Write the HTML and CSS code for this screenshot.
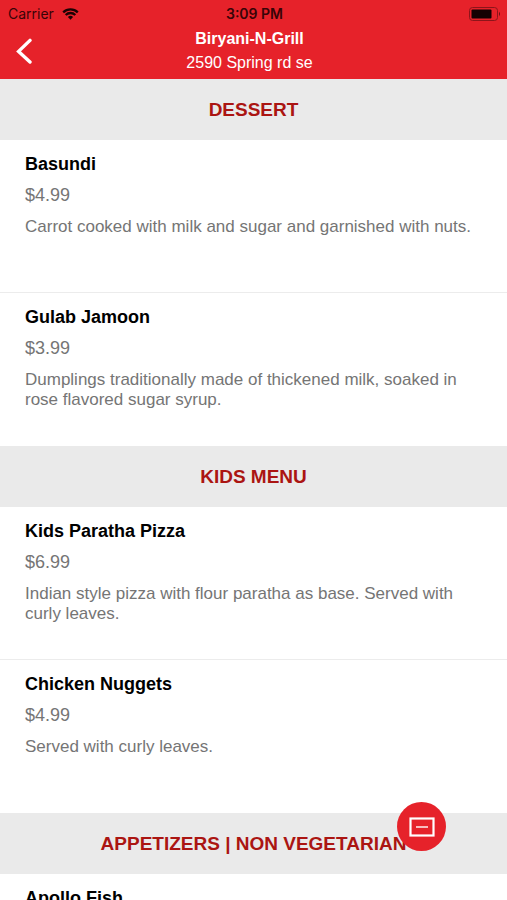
FILE: index.html
```html
<!DOCTYPE html>
<html lang="en">
<head>
<meta charset="utf-8">
<meta name="viewport" content="width=device-width, initial-scale=1">
<title>Biryani-N-Grill</title>
<link rel="stylesheet" href="styles.css">
</head>
<body>
<div class="app">
  <header class="top">
    <div class="status">
      <div class="carrier">
        <span>Carrier</span>
        <svg class="wifi" viewBox="0 0 17 12" aria-hidden="true">
          <path d="M1.2 4.4a10.4 10.4 0 0 1 14.6 0" />
          <path d="M3.7 7a6.8 6.8 0 0 1 9.6 0" />
          <path class="wifi-dot" d="M8.5 11.8 5.9 9.1a3.7 3.7 0 0 1 5.2 0z" />
        </svg>
      </div>
      <time class="clock">3:09 PM</time>
      <svg class="battery" viewBox="0 0 32 14" aria-hidden="true">
        <rect class="battery-case" x="0.5" y="0.5" width="28" height="13" rx="3" />
        <rect x="2.5" y="2.5" width="20" height="9" rx="1" />
        <path d="M30 4.8q2 2.2 0 4.4z" opacity=".6" />
      </svg>
    </div>
    <div class="nav">
      <button class="back" type="button" aria-label="Back">
        <svg viewBox="0 0 16 26" aria-hidden="true"><path d="M14 2.4 2.6 13.4 14 24" /></svg>
      </button>
      <div class="place">
        <h1 class="place-name">Biryani-N-Grill</h1>
        <p class="place-address">2590 Spring rd se</p>
      </div>
    </div>
  </header>
  <main class="menu">
    <section>
      <h2 class="section-title">DESSERT</h2>
      <article class="item">
        <h3 class="item-name">Basundi</h3>
        <p class="item-price">$4.99</p>
        <p class="item-text">Carrot cooked with milk and sugar and garnished with nuts.</p>
      </article>
      <article class="item">
        <h3 class="item-name">Gulab Jamoon</h3>
        <p class="item-price">$3.99</p>
        <p class="item-text">Dumplings traditionally made of thickened milk, soaked in rose flavored sugar syrup.</p>
      </article>
    </section>
    <section>
      <h2 class="section-title">KIDS MENU</h2>
      <article class="item">
        <h3 class="item-name">Kids Paratha Pizza</h3>
        <p class="item-price">$6.99</p>
        <p class="item-text">Indian style pizza with flour paratha as base. Served with curly leaves.</p>
      </article>
      <article class="item">
        <h3 class="item-name">Chicken Nuggets</h3>
        <p class="item-price">$4.99</p>
        <p class="item-text">Served with curly leaves.</p>
      </article>
    </section>
    <section>
      <h2 class="section-title">APPETIZERS | NON VEGETARIAN</h2>
      <article class="item">
        <h3 class="item-name">Apollo Fish</h3>
      </article>
    </section>
  </main>
  <button class="fab" type="button" aria-label="Menu sections">
    <svg viewBox="0 0 26 20" aria-hidden="true">
      <rect x="1.5" y="1.5" width="23" height="17" />
      <path class="fab-dash" d="M7 10h12" />
    </svg>
  </button>
</div>
</body>
</html>
```
FILE: styles.css
```css
* {
  box-sizing: border-box;
}

body,
h1,
h2,
h3,
p {
  margin: 0;
}

body {
  font-family: "Liberation Sans", Arial, sans-serif;
  background: #fff;
  color: #000;
}

button {
  border: 0;
  padding: 0;
  cursor: pointer;
}

.app {
  height: 100vh;
  display: flex;
  flex-direction: column;
}

.top {
  background: #e6222a;
  padding-bottom: 4px;
}

.status {
  display: grid;
  grid-template-columns: 1fr auto 1fr;
  align-items: center;
  height: 27px;
  padding: 0 6px 0 8px;
  font-family: Inter, "Liberation Sans", sans-serif;
  font-size: 14px;
  color: #380407;
}

.carrier {
  display: flex;
  align-items: center;
  gap: 8px;
}

.wifi {
  width: 17px;
  height: 12px;
  fill: none;
  stroke: #1c0203;
  stroke-width: 2.3;
}

.wifi-dot {
  fill: #1c0203;
  stroke: none;
}

.clock {
  font-weight: 600;
}

.battery {
  justify-self: end;
  width: 32px;
  height: 14px;
  fill: #160102;
}

.battery-case {
  fill: none;
  stroke: #8c151a;
}

.nav {
  display: grid;
  grid-template-columns: 48px 1fr 56px;
  align-items: center;
  color: #fff;
}

.back {
  display: flex;
  align-items: center;
  height: 48px;
  padding-left: 16px;
  background: none;
}

.back svg {
  width: 16px;
  height: 26px;
  fill: none;
  stroke: #fff;
  stroke-width: 3.4;
  stroke-linecap: round;
}

.place {
  text-align: center;
  font-size: 16px;
  line-height: 24px;
}

.place-name {
  font-size: 16px;
  font-weight: bold;
}

.menu {
  flex: 1;
  min-height: 0;
  overflow-y: auto;
  scrollbar-width: none;
}

.section-title {
  padding: 0 24px;
  background: #eaeaea;
  color: #ab1512;
  font-size: 19px;
  font-weight: bold;
  line-height: 61px;
  text-align: center;
}

.item {
  min-height: 153px;
  padding: 12px 24px 12px 25px;
  border-bottom: 1px solid #ececec;
}

.item:last-child {
  border-bottom: 0;
}

.item-name {
  font-size: 18px;
  line-height: 24px;
}

.item-price {
  margin-top: 7px;
  color: #757575;
  font-size: 18px;
  line-height: 24px;
}

.item-text {
  margin-top: 10px;
  color: #757575;
  font-size: 17px;
  line-height: 20px;
}

.fab {
  position: fixed;
  right: 61px;
  bottom: 49px;
  width: 49px;
  height: 49px;
  display: grid;
  place-items: center;
  border-radius: 50%;
  background: #e6222a;
}

.fab svg {
  width: 26px;
  height: 20px;
  fill: none;
  stroke: #fff;
  stroke-width: 2.2;
}

.fab .fab-dash {
  stroke-width: 1.4;
}
```
